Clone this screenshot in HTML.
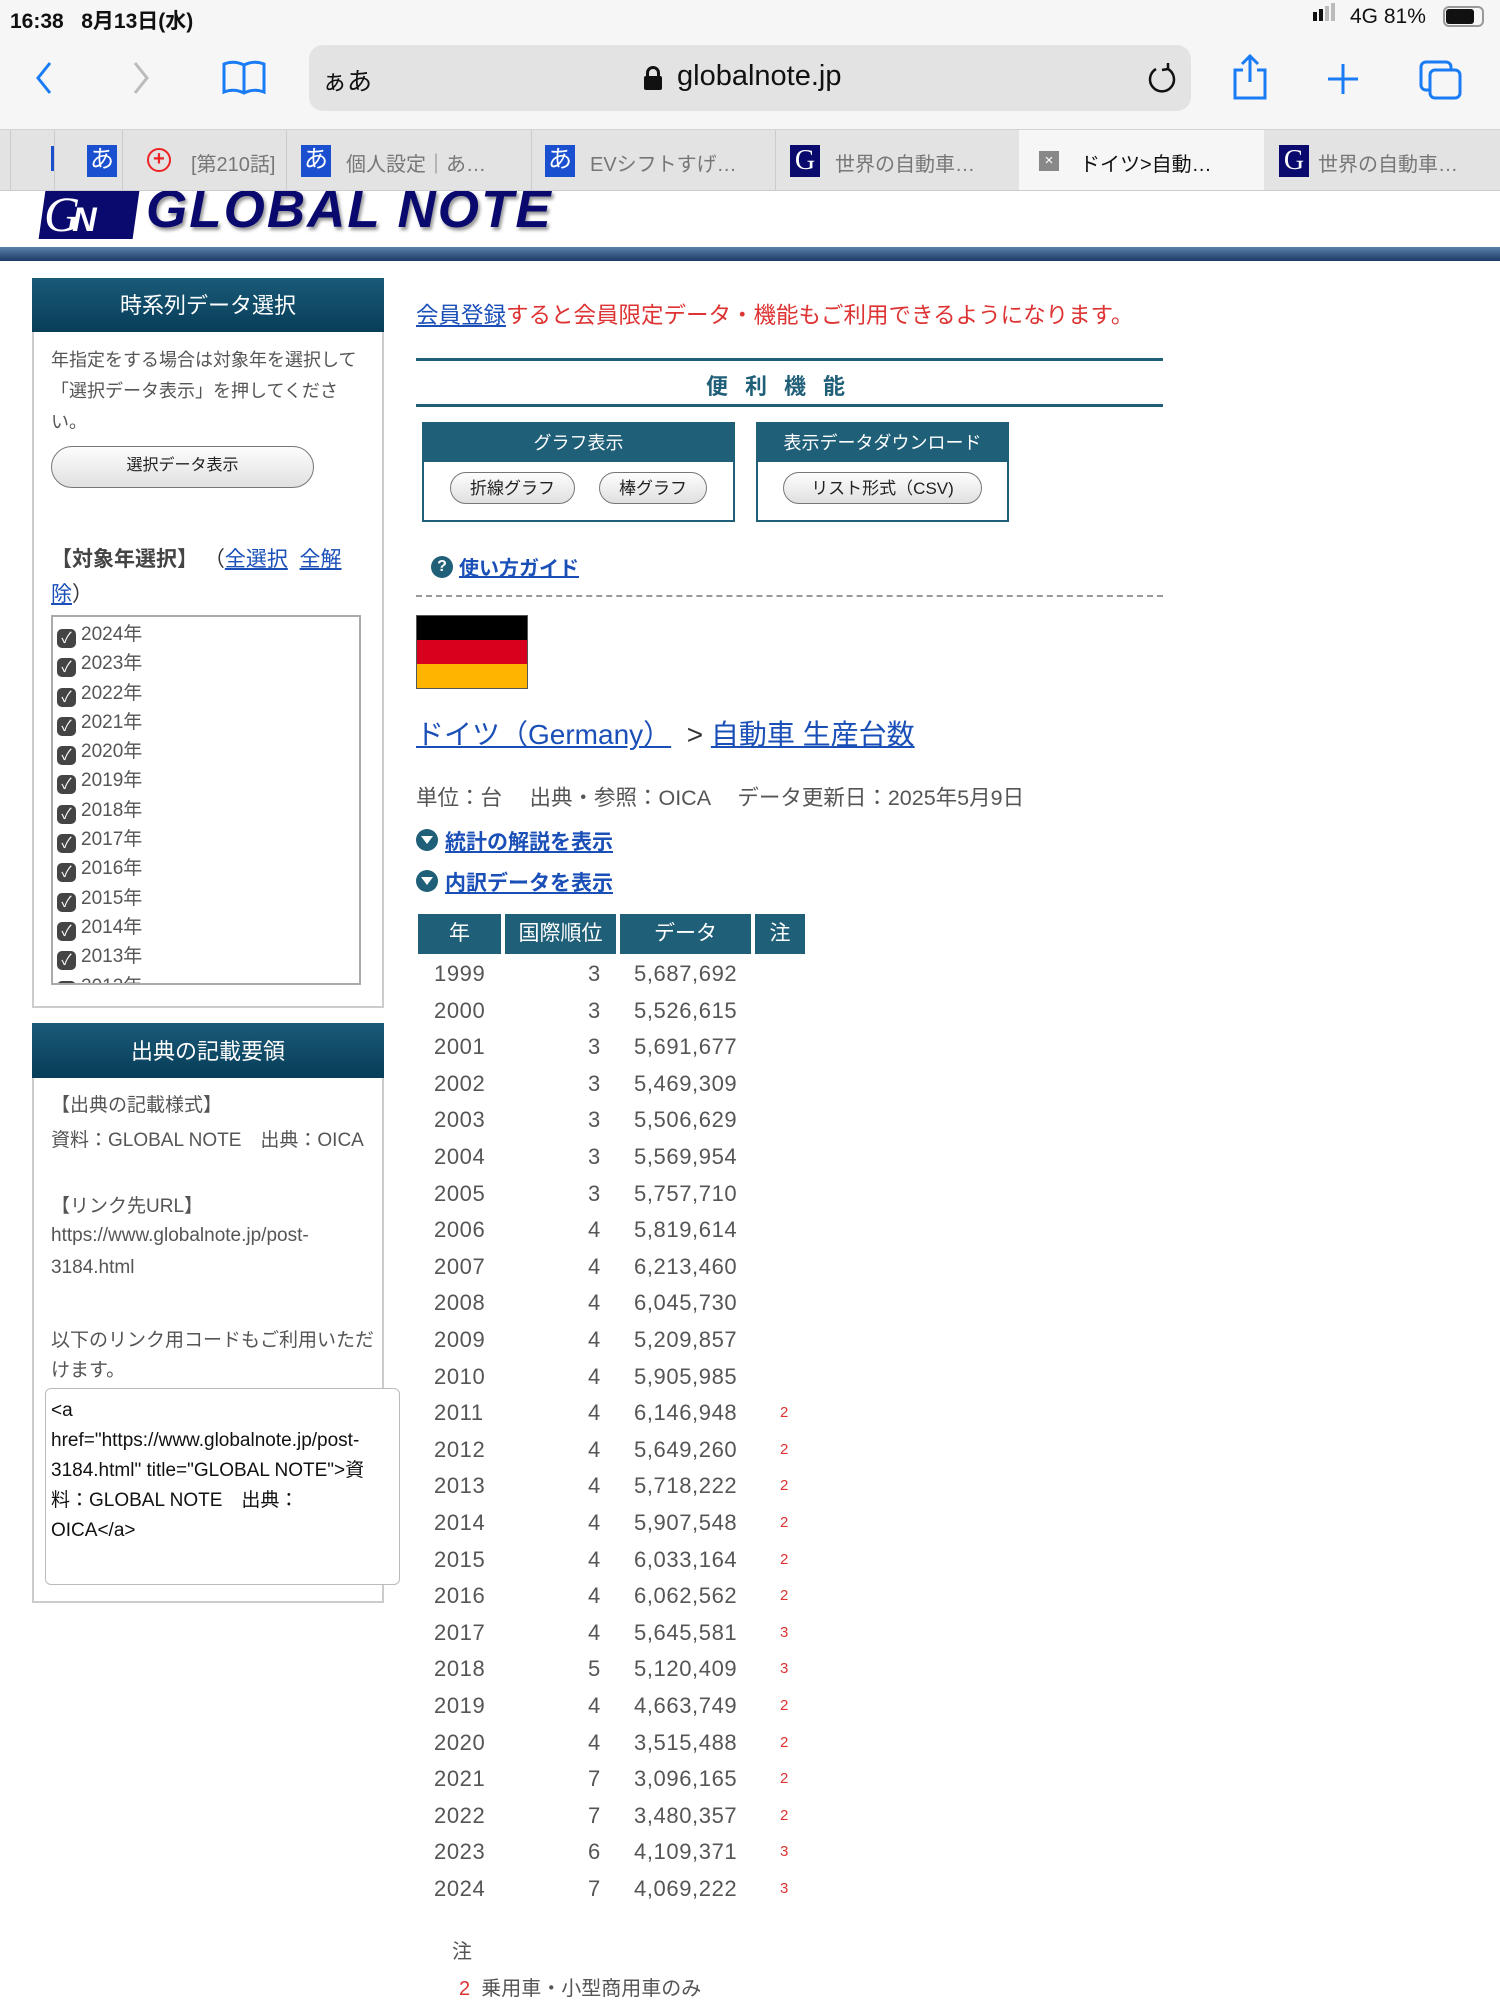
<!DOCTYPE html>
<html><head><meta charset="utf-8"><style>
*{margin:0;padding:0;box-sizing:border-box}
body{width:1500px;height:2000px;position:relative;background:#fff;font-family:"Liberation Sans","Noto Sans CJK JP",sans-serif;overflow:hidden;color:#555}
.a{position:absolute;white-space:nowrap}
.lk{color:#1a4fb8;text-decoration:underline}
.btn{position:absolute;border:1.5px solid #777;border-radius:20px;background:linear-gradient(#fdfdfd,#e0e0e0);color:#222;text-align:center;font-size:17px}
.hd{position:absolute;background:linear-gradient(#1a5a78,#073d58);color:#fff;text-align:center}
.th{position:absolute;top:912px;height:40px;background:#1f5f78;color:#fff;font-size:21px;line-height:40px;text-align:center}
.row{position:absolute;left:416px;font-size:22px;color:#555;height:30px}
.row span{position:absolute}
.cb{display:inline-block;width:19px;height:19px;background:#444;border-radius:5px;color:#fff;font-size:15px;line-height:19px;text-align:center;vertical-align:-3px;margin-right:5px}
</style></head><body>
<!-- chrome -->
<div class="a" style="left:0;top:0;width:1500px;height:129px;background:#f6f6f6"></div>
<div class="a" style="left:10px;top:5px;font-size:21px;color:#111;font-weight:bold">16:38&nbsp;&nbsp;&nbsp;8月13日(水)</div>
<div class="a" style="left:1313px;top:12px;width:4px;height:9px;background:#111"></div>
<div class="a" style="left:1319px;top:9px;width:4px;height:12px;background:#111"></div>
<div class="a" style="left:1325px;top:6px;width:4px;height:15px;background:#bbb"></div>
<div class="a" style="left:1331px;top:3px;width:4px;height:18px;background:#bbb"></div>
<div class="a" style="left:1350px;top:5px;font-size:21px;color:#111">4G 81%</div>
<div class="a" style="left:1443px;top:6px;width:41px;height:21px;border:2px solid #999;border-radius:6px"></div>
<div class="a" style="left:1446px;top:9px;width:28px;height:15px;background:#111;border-radius:3px"></div>
<svg class="a" style="left:30px;top:58px" width="200" height="40" viewBox="0 0 200 40"><path d="M20 5 L8 20 L20 35" stroke="#1a7cf5" stroke-width="3" fill="none"/><path d="M105 5 L117 20 L105 35" stroke="#bbb" stroke-width="3" fill="none"/></svg>
<svg class="a" style="left:220px;top:58px" width="50" height="40" viewBox="0 0 50 40"><path d="M4 6 Q14 2 24 7 Q34 2 44 6 L44 34 Q34 30 24 35 Q14 30 4 34 Z M24 7 L24 35" stroke="#1a7cf5" stroke-width="3" fill="none"/></svg>
<div class="a" style="left:309px;top:45px;width:882px;height:66px;background:#e3e3e3;border-radius:14px"></div>
<div class="a" style="left:322px;top:62px;font-size:25px;color:#111">ぁあ</div>
<div class="a" style="left:646px;top:66px;width:14px;height:14px;border:3px solid #111;border-bottom:none;border-radius:7px 7px 0 0"></div>
<div class="a" style="left:644px;top:76px;width:18px;height:14px;background:#111;border-radius:2px"></div>
<div class="a" style="left:677px;top:60px;font-size:29px;color:#111">globalnote.jp</div>
<svg class="a" style="left:1142px;top:60px" width="40" height="40" viewBox="0 0 40 40"><path d="M26 9 A12 12 0 1 1 14 9 M26 9 L26 3 M26 9 L20 10" stroke="#111" stroke-width="2.5" fill="none"/></svg>
<svg class="a" style="left:1225px;top:52px" width="280" height="50" viewBox="0 0 280 50"><path d="M25 4 L25 30 M17 12 L25 4 L33 12 M18 18 L10 18 L10 46 L40 46 L40 18 L32 18" stroke="#1a7cf5" stroke-width="3" fill="none"/><path d="M118 12 L118 42 M103 27 L133 27" stroke="#1a7cf5" stroke-width="3"/><rect x="196" y="10" width="30" height="28" rx="5" stroke="#1a7cf5" stroke-width="3" fill="none"/><rect x="205" y="18" width="30" height="28" rx="5" stroke="#1a7cf5" stroke-width="3" fill="#f6f6f6"/></svg>
<!-- tabs -->
<div class="a" style="left:0;top:129px;width:1500px;height:62px;background:#e3e3e3;border-top:1px solid #d4d4d4;border-bottom:1px solid #ccc"></div>
<div class="a" style="left:1019px;top:130px;width:245px;height:60px;background:#f6f6f6"></div>
<div class="a" style="left:10px;top:130px;width:1px;height:60px;background:#ccc"></div>
<div class="a" style="left:51px;top:146px;width:3px;height:25px;background:#1a4fd0"></div>
<div class="a" style="left:54px;top:130px;width:1px;height:60px;background:#ccc"></div>
<div class="a" style="left:122px;top:130px;width:1px;height:60px;background:#ccc"></div>
<div class="a" style="left:286px;top:130px;width:1px;height:60px;background:#ccc"></div>
<div class="a" style="left:531px;top:130px;width:1px;height:60px;background:#ccc"></div>
<div class="a" style="left:775px;top:130px;width:1px;height:60px;background:#ccc"></div>
<div class="a" style="left:87px;top:145px;width:30px;height:32px;background:#1a4fd0;color:#fff;font-size:24px;line-height:30px;text-align:center">あ</div>
<div class="a" style="left:147px;top:148px;width:24px;height:24px;border:2px solid #e22;border-radius:50%;color:#e22;font-size:20px;line-height:19px;text-align:center;font-weight:bold">+</div>
<div class="a" style="left:191px;top:148px;font-size:20px;color:#777">[第210話]</div>
<div class="a" style="left:301px;top:145px;width:30px;height:32px;background:#1a4fd0;color:#fff;font-size:24px;line-height:30px;text-align:center">あ</div>
<div class="a" style="left:346px;top:148px;font-size:20px;color:#777">個人設定｜あ…</div>
<div class="a" style="left:545px;top:145px;width:30px;height:32px;background:#1a4fd0;color:#fff;font-size:24px;line-height:30px;text-align:center">あ</div>
<div class="a" style="left:590px;top:148px;font-size:20px;color:#777">EVシフトすげ…</div>
<div class="a" style="left:790px;top:145px;width:30px;height:32px;background:#0a0a6e;color:#fff;font-size:28px;line-height:32px;text-align:center;font-family:'Liberation Serif',serif">G</div>
<div class="a" style="left:835px;top:148px;font-size:20px;color:#777">世界の自動車…</div>
<div class="a" style="left:1039px;top:151px;width:20px;height:20px;background:#888;color:#fff;font-size:15px;line-height:20px;text-align:center">×</div>
<div class="a" style="left:1080px;top:148px;font-size:20px;color:#111">ドイツ&gt;自動…</div>
<div class="a" style="left:1279px;top:145px;width:30px;height:32px;background:#0a0a6e;color:#fff;font-size:28px;line-height:32px;text-align:center;font-family:'Liberation Serif',serif">G</div>
<div class="a" style="left:1318px;top:148px;font-size:20px;color:#777">世界の自動車…</div>
<!-- logo -->
<div class="a" style="left:0;top:191px;width:600px;height:56px;overflow:hidden">
<div class="a" style="left:42px;top:0px;width:94px;height:48px;background:#0a0a6e;transform:skewX(-8deg)"></div>
<div class="a" style="left:44px;top:-6px;font-size:50px;color:#fff;font-family:'Liberation Serif',serif;font-style:italic;letter-spacing:-8px">G<span style="font-size:34px;font-family:'Liberation Sans';font-weight:bold;font-style:italic">N</span></div>
<div class="a" style="left:146px;top:-12px;font-size:53px;color:#0a0a6e;font-weight:bold;font-style:italic;text-shadow:2px 3px 3px #999;letter-spacing:2px">GLOBAL NOTE</div>
</div>
<div class="a" style="left:0;top:247px;width:1500px;height:14px;background:linear-gradient(#5a82aa,#1c3a66)"></div>
<!-- sidebar box1 -->
<div class="a" style="left:32px;top:278px;width:352px;height:730px;border:2px solid #ccc;border-top:none"></div>
<div class="hd" style="left:32px;top:278px;width:352px;height:54px;font-size:22px;line-height:56px">時系列データ選択</div>
<div class="a" style="left:51px;top:345px;font-size:18px;line-height:31px;color:#555;white-space:normal;width:322px">年指定をする場合は対象年を選択して「選択データ表示」を押してください。</div>
<div class="btn" style="left:51px;top:446px;width:263px;height:42px;line-height:38px;border-radius:22px;font-size:16px">選択データ表示</div>
<div class="a" style="left:51px;top:542px;font-size:21px;line-height:35px;color:#333;white-space:normal;width:320px"><b style="color:#444">【対象年選択】</b>&nbsp;（<span class="lk">全選択</span>&nbsp;&nbsp;<span class="lk">全解除</span>）</div>
<div class="a" style="left:51px;top:615px;width:310px;height:370px;border:2px solid #aaa;overflow:hidden">
<div style="position:absolute;left:4px;top:3px;font-size:19px;line-height:29.3px;color:#555">
<div><span class="cb">✓</span>2024年</div><div><span class="cb">✓</span>2023年</div><div><span class="cb">✓</span>2022年</div><div><span class="cb">✓</span>2021年</div><div><span class="cb">✓</span>2020年</div><div><span class="cb">✓</span>2019年</div><div><span class="cb">✓</span>2018年</div><div><span class="cb">✓</span>2017年</div><div><span class="cb">✓</span>2016年</div><div><span class="cb">✓</span>2015年</div><div><span class="cb">✓</span>2014年</div><div><span class="cb">✓</span>2013年</div><div><span class="cb">✓</span>2012年</div></div></div>
<!-- sidebar box2 -->
<div class="a" style="left:32px;top:1023px;width:352px;height:580px;border:2px solid #ccc;border-top:none"></div>
<div class="hd" style="left:32px;top:1023px;width:352px;height:55px;font-size:22px;line-height:57px">出典の記載要領</div>
<div class="a" style="left:51px;top:1090px;font-size:19px;color:#555">【出典の記載様式】</div>
<div class="a" style="left:51px;top:1125px;font-size:19px;color:#555">資料：GLOBAL NOTE　出典：OICA</div>
<div class="a" style="left:51px;top:1191px;font-size:19px;color:#555">【リンク先URL】</div>
<div class="a" style="left:51px;top:1225px;font-size:19px;color:#555">https://www.globalnote.jp/post-</div>
<div class="a" style="left:51px;top:1257px;font-size:19px;color:#555">3184.html</div>
<div class="a" style="left:51px;top:1325px;font-size:19px;color:#555">以下のリンク用コードもご利用いただ</div>
<div class="a" style="left:51px;top:1355px;font-size:19px;color:#555">けます。</div>
<div class="a" style="left:45px;top:1388px;width:355px;height:197px;border:1.5px solid #bbb;border-radius:6px;background:#fff"></div>
<div class="a" style="left:51px;top:1396px;font-size:19px;line-height:30px;color:#111">&lt;a<br>href="https://www.globalnote.jp/post-<br>3184.html" title="GLOBAL NOTE"&gt;資<br>料：GLOBAL NOTE　出典：<br>OICA&lt;/a&gt;</div>
<!-- main -->
<div class="a" style="left:416px;top:298px;font-size:22.5px;color:#d33"><span class="lk" style="color:#1a4fb8">会員登録</span>すると会員限定データ・機能もご利用できるようになります。</div>
<div class="a" style="left:416px;top:358px;width:747px;height:3px;background:#1f5f78"></div>
<div class="a" style="left:416px;top:404px;width:747px;height:3px;background:#1f5f78"></div>
<div class="a" style="left:706px;top:369px;font-size:22px;color:#1f5f78;font-weight:bold;letter-spacing:17px">便利機能</div>
<div class="a" style="left:422px;top:422px;width:313px;height:100px;border:2px solid #1f5f78"></div>
<div class="a" style="left:422px;top:422px;width:313px;height:40px;background:#1f5f78;color:#fff;font-size:18px;line-height:42px;text-align:center">グラフ表示</div>
<div class="a" style="left:756px;top:422px;width:253px;height:100px;border:2px solid #1f5f78"></div>
<div class="a" style="left:756px;top:422px;width:253px;height:40px;background:#1f5f78;color:#fff;font-size:18px;line-height:42px;text-align:center">表示データダウンロード</div>
<div class="btn" style="left:450px;top:472px;width:125px;height:32px;line-height:31px">折線グラフ</div>
<div class="btn" style="left:599px;top:472px;width:108px;height:32px;line-height:31px">棒グラフ</div>
<div class="btn" style="left:783px;top:472px;width:199px;height:32px;line-height:31px">リスト形式（CSV)</div>
<div class="a" style="left:431px;top:556px;width:22px;height:22px;border-radius:50%;background:#1f5f78;color:#fff;font-size:16px;line-height:22px;text-align:center;font-weight:bold">?</div>
<div class="a lk" style="left:459px;top:552px;font-size:20px;font-weight:bold">使い方ガイド</div>
<div class="a" style="left:416px;top:595px;width:747px;border-top:2px dashed #999"></div>
<div class="a" style="left:416px;top:615px;width:112px;height:74px;border:1px solid #555">
<div style="height:24px;background:#000"></div><div style="height:24px;background:#d9001d"></div><div style="height:24px;background:#ffb400"></div></div>
<div class="a" style="left:416px;top:713px;font-size:28px;color:#333"><span class="lk">ドイツ（Germany）</span>&nbsp;&nbsp;&gt;&nbsp;<span class="lk">自動車 生産台数</span></div>
<div class="a" style="left:416px;top:781px;font-size:21.5px;color:#555">単位：台　 出典・参照：OICA　 データ更新日：2025年5月9日</div>
<div class="a" style="left:416px;top:829px;width:22px;height:22px;border-radius:50%;background:#1f5f78"></div>
<div class="a" style="left:421px;top:836px;width:0;height:0;border-left:6px solid transparent;border-right:6px solid transparent;border-top:8px solid #fff"></div>
<div class="a lk" style="left:445px;top:826px;font-size:21px;font-weight:bold">統計の解説を表示</div>
<div class="a" style="left:416px;top:870px;width:22px;height:22px;border-radius:50%;background:#1f5f78"></div>
<div class="a" style="left:421px;top:877px;width:0;height:0;border-left:6px solid transparent;border-right:6px solid transparent;border-top:8px solid #fff"></div>
<div class="a lk" style="left:445px;top:867px;font-size:21px;font-weight:bold">内訳データを表示</div>
<div class="th" style="left:418px;width:83px;top:914px">年</div>
<div class="th" style="left:505px;width:111px;top:914px">国際順位</div>
<div class="th" style="left:620px;width:131px;top:914px">データ</div>
<div class="th" style="left:755px;width:50px;top:914px">注</div>
<div class="a" style="left:452px;top:1935px;font-size:20px;color:#555">注</div>
<div class="a" style="left:459px;top:1972px;font-size:20px;color:#555"><span style="color:#d33">2</span>&nbsp;&nbsp;乗用車・小型商用車のみ</div>
<div style="position:absolute;left:0;top:3px;letter-spacing:0.6px">
<div class="row" style="top:958px"><span style="left:18px">1999</span><span style="left:172px">3</span><span style="left:218px">5,687,692</span></div>
<div class="row" style="top:995px"><span style="left:18px">2000</span><span style="left:172px">3</span><span style="left:218px">5,526,615</span></div>
<div class="row" style="top:1031px"><span style="left:18px">2001</span><span style="left:172px">3</span><span style="left:218px">5,691,677</span></div>
<div class="row" style="top:1068px"><span style="left:18px">2002</span><span style="left:172px">3</span><span style="left:218px">5,469,309</span></div>
<div class="row" style="top:1104px"><span style="left:18px">2003</span><span style="left:172px">3</span><span style="left:218px">5,506,629</span></div>
<div class="row" style="top:1141px"><span style="left:18px">2004</span><span style="left:172px">3</span><span style="left:218px">5,569,954</span></div>
<div class="row" style="top:1178px"><span style="left:18px">2005</span><span style="left:172px">3</span><span style="left:218px">5,757,710</span></div>
<div class="row" style="top:1214px"><span style="left:18px">2006</span><span style="left:172px">4</span><span style="left:218px">5,819,614</span></div>
<div class="row" style="top:1251px"><span style="left:18px">2007</span><span style="left:172px">4</span><span style="left:218px">6,213,460</span></div>
<div class="row" style="top:1287px"><span style="left:18px">2008</span><span style="left:172px">4</span><span style="left:218px">6,045,730</span></div>
<div class="row" style="top:1324px"><span style="left:18px">2009</span><span style="left:172px">4</span><span style="left:218px">5,209,857</span></div>
<div class="row" style="top:1361px"><span style="left:18px">2010</span><span style="left:172px">4</span><span style="left:218px">5,905,985</span></div>
<div class="row" style="top:1397px"><span style="left:18px">2011</span><span style="left:172px">4</span><span style="left:218px">6,146,948</span><span style="left:364px;top:4px;font-size:15px;color:#d33">2</span></div>
<div class="row" style="top:1434px"><span style="left:18px">2012</span><span style="left:172px">4</span><span style="left:218px">5,649,260</span><span style="left:364px;top:4px;font-size:15px;color:#d33">2</span></div>
<div class="row" style="top:1470px"><span style="left:18px">2013</span><span style="left:172px">4</span><span style="left:218px">5,718,222</span><span style="left:364px;top:4px;font-size:15px;color:#d33">2</span></div>
<div class="row" style="top:1507px"><span style="left:18px">2014</span><span style="left:172px">4</span><span style="left:218px">5,907,548</span><span style="left:364px;top:4px;font-size:15px;color:#d33">2</span></div>
<div class="row" style="top:1544px"><span style="left:18px">2015</span><span style="left:172px">4</span><span style="left:218px">6,033,164</span><span style="left:364px;top:4px;font-size:15px;color:#d33">2</span></div>
<div class="row" style="top:1580px"><span style="left:18px">2016</span><span style="left:172px">4</span><span style="left:218px">6,062,562</span><span style="left:364px;top:4px;font-size:15px;color:#d33">2</span></div>
<div class="row" style="top:1617px"><span style="left:18px">2017</span><span style="left:172px">4</span><span style="left:218px">5,645,581</span><span style="left:364px;top:4px;font-size:15px;color:#d33">3</span></div>
<div class="row" style="top:1653px"><span style="left:18px">2018</span><span style="left:172px">5</span><span style="left:218px">5,120,409</span><span style="left:364px;top:4px;font-size:15px;color:#d33">3</span></div>
<div class="row" style="top:1690px"><span style="left:18px">2019</span><span style="left:172px">4</span><span style="left:218px">4,663,749</span><span style="left:364px;top:4px;font-size:15px;color:#d33">2</span></div>
<div class="row" style="top:1727px"><span style="left:18px">2020</span><span style="left:172px">4</span><span style="left:218px">3,515,488</span><span style="left:364px;top:4px;font-size:15px;color:#d33">2</span></div>
<div class="row" style="top:1763px"><span style="left:18px">2021</span><span style="left:172px">7</span><span style="left:218px">3,096,165</span><span style="left:364px;top:4px;font-size:15px;color:#d33">2</span></div>
<div class="row" style="top:1800px"><span style="left:18px">2022</span><span style="left:172px">7</span><span style="left:218px">3,480,357</span><span style="left:364px;top:4px;font-size:15px;color:#d33">2</span></div>
<div class="row" style="top:1836px"><span style="left:18px">2023</span><span style="left:172px">6</span><span style="left:218px">4,109,371</span><span style="left:364px;top:4px;font-size:15px;color:#d33">3</span></div>
<div class="row" style="top:1873px"><span style="left:18px">2024</span><span style="left:172px">7</span><span style="left:218px">4,069,222</span><span style="left:364px;top:4px;font-size:15px;color:#d33">3</span></div>
</div>
</body></html>
